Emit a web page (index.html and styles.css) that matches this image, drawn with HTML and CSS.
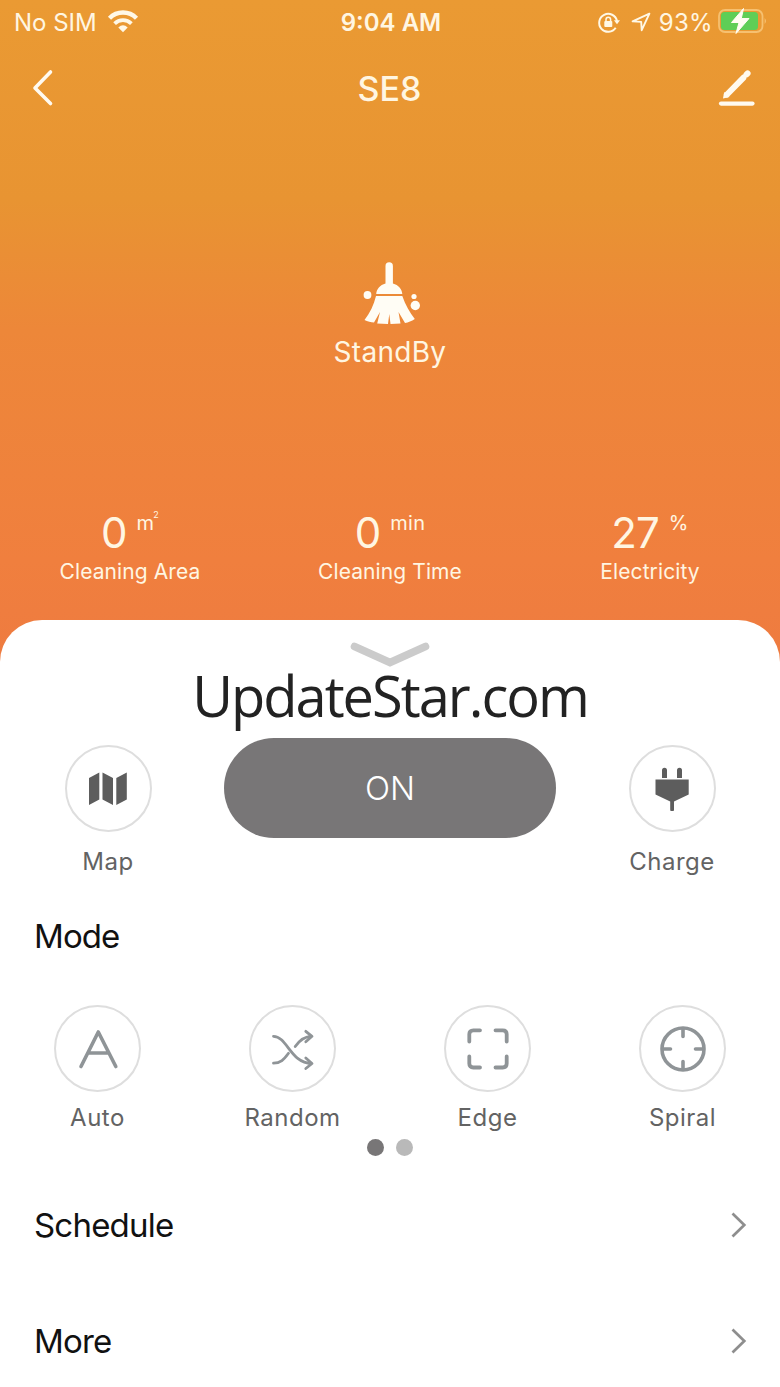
FILE: index.html
```
<!DOCTYPE html>
<html lang="en">

<head>
  <meta charset="UTF-8">
  <meta name="viewport" content="width=device-width, initial-scale=1.0">
  <title>SE8</title>
  <link rel="stylesheet" href="styles.css">
</head>

<body>
  <section class="hero">
    <div class="statusbar">
      <div class="status-left">
        <span class="carrier">No SIM</span>
        <svg class="wifi" width="32" height="24" viewBox="0 0 32 24" fill="none" stroke="#fff8e6">
          <path d="M2.5 8.2 A19 19 0 0 1 29.5 8.2" stroke-width="4.4" />
          <path d="M7.6 13.6 A12 12 0 0 1 24.4 13.6" stroke-width="3.8" />
          <path d="M11.3 17.4 Q16 13.2 20.7 17.4 L16 22.3Z" fill="#fff8e6" stroke="none" />
        </svg>
      </div>
      <span class="clock">9:04 AM</span>
      <div class="status-right">
        <svg width="24" height="24" viewBox="0 0 24 24" fill="none" stroke="#fff8e6" stroke-width="2">
          <path d="M18.7 17.8 A9 9 0 1 1 20 11" />
          <path d="M16.9 10.3 L23 10.3 L20 14.2Z" fill="#fff8e6" stroke="none" />
          <rect x="7.3" y="11" width="8" height="6" rx="1" fill="#fff8e6" stroke="none" />
          <path d="M9 11 V9.5 A2.3 2.3 0 0 1 13.6 9.5 V11" stroke-width="1.5" />
        </svg>
        <svg class="location" width="20" height="20" viewBox="0 0 20 20" fill="none" stroke="#fff8e6" stroke-width="1.9" stroke-linejoin="round">
          <path d="M18.4 1.6 L1.6 9.4 L10.2 9.9 L10.7 18.2Z" />
        </svg>
        <span class="percent">93%</span>
        <svg class="battery" width="50" height="26" viewBox="0 0 50 26">
          <rect x="1" y="2" width="43.5" height="22" rx="6" fill="none" stroke="#f6c070" stroke-width="1.8" />
          <path d="M46.6 10 Q49.4 13 46.6 16Z" fill="#f6c070" />
          <rect x="3" y="4" width="37" height="18" rx="3.5" fill="#5fce56" />
          <path d="M25.5 .5 L13.5 14.5 L21 14.5 L18 25.5 L31 10.5 L23.3 10.5Z" fill="#fffdf2" stroke="#fffdf2" stroke-width="1" />
        </svg>
      </div>
    </div>

    <header class="navbar">
      <svg class="back" width="24" height="38" viewBox="0 0 24 38" fill="none" stroke="#fffaf0" stroke-width="3.6" stroke-linecap="round" stroke-linejoin="round">
        <path d="M19.5 3 L4 19 L19.5 34.5" />
      </svg>
      <h1>SE8</h1>
      <svg class="edit" width="38" height="38" viewBox="0 0 38 38">
        <path d="M9 25.5 L25.3 8.8 M28.6 5.4 L29.6 4.4" stroke="#fffaf0" stroke-width="6" stroke-linecap="round" />
        <path d="M6.2 23 L5 29.4 L11.5 28Z" fill="#fffaf0" />
        <path d="M3 34.6 H34.5" stroke="#fffaf0" stroke-width="4.2" stroke-linecap="round" />
      </svg>
    </header>

    <div class="state">
      <svg width="60" height="64" viewBox="0 0 60 64" fill="#fffdf5">
        <path d="M25.5 5 A3.7 3.7 0 0 1 32.9 5 V22.5 C38.5 24 42 28 42.3 33 H16.2 C16.5 28 20 24 25.5 22.5Z" />
        <path d="M16 35 H42.3 C45.5 44 49.5 51 54.8 58 C51.5 60 48.5 61.5 45 62 L38.5 51 L40.5 62.5 L30.5 63 L29.3 53 L28 63 L17.2 62.5 L20 51 L14 61.5 C11 61.5 7.5 60.5 4.5 59 C10 52 13.8 44 16 35Z" />
        <circle cx="7.5" cy="34" r="3.9" />
        <circle cx="54" cy="35.5" r="2.6" />
        <circle cx="55.3" cy="44.5" r="4.7" />
      </svg>
      <p>StandBy</p>
    </div>

    <div class="stats">
      <div class="stat">
        <div class="value">0<span class="unit square">m<sup>2</sup></span></div>
        <div class="label">Cleaning Area</div>
      </div>
      <div class="stat">
        <div class="value">0<span class="unit">min</span></div>
        <div class="label">Cleaning Time</div>
      </div>
      <div class="stat">
        <div class="value">27<span class="unit">%</span></div>
        <div class="label">Electricity</div>
      </div>
    </div>
  </section>

  <main class="sheet">
    <svg class="handle" width="80" height="26" viewBox="0 0 80 26" fill="none" stroke="#cbcbcb" stroke-width="7.6" stroke-linecap="round">
      <path d="M4.5 4.5 L40 20.5 L75.5 4.5" />
    </svg>

    <div class="watermark">UpdateStar.com</div>

    <div class="controls">
      <div class="item">
        <div class="circle">
          <svg width="44" height="44" viewBox="0 0 44 44" fill="#5d5d5d">
            <path d="M3 11 L13.3 5.5 V32.5 L3 38Z M16.5 5.5 L27 11 V38 L16.5 32.5Z M30.3 11 L40.8 5.5 V32.5 L30.3 38Z" />
          </svg>
        </div>
        <span>Map</span>
      </div>
      <button type="button">ON</button>
      <div class="item">
        <div class="circle">
          <svg width="44" height="44" viewBox="0 0 44 44" fill="#5d5d5d">
            <path d="M5.5 12.5 H38.7 V27.5 L24 34.5 V42.5 A1.9 1.9 0 0 1 20.2 42.5 V34.5 L5.5 27.5Z" />
            <path d="M14.5 3.2 V8.5 M29.5 3.2 V8.5" stroke="#5d5d5d" stroke-width="5" stroke-linecap="round" />
            <path d="M12 8 H17 V11 H12Z M27 8 H32 V11 H27Z" />
          </svg>
        </div>
        <span>Charge</span>
      </div>
    </div>

    <h2>Mode</h2>

    <div class="modes">
      <div class="item">
        <div class="circle">
          <svg width="44" height="44" viewBox="0 0 44 44" fill="none" stroke="#8f9497" stroke-width="3.6" stroke-linecap="round" stroke-linejoin="round">
            <path d="M5 39.5 L22.3 5 L39.8 39.5 M12.5 26 H32" />
          </svg>
        </div>
        <span>Auto</span>
      </div>
      <div class="item">
        <div class="circle">
          <svg width="44" height="44" viewBox="0 0 44 44" fill="none" stroke="#8f9497" stroke-width="2.8" stroke-linecap="round" stroke-linejoin="round">
            <path d="M2.5 9.3 C16 9.3 20 36.5 40.5 36.5 M34.8 31 L41 36.5 L34.8 41.5" />
            <path d="M2.5 36.2 C9.5 36.2 13 32.5 17.5 26.3 M24.2 19.5 C28 14 32.5 9.3 40.5 9.3 M34.8 4.3 L41 9.3 L34.8 14.8" />
          </svg>
        </div>
        <span>Random</span>
      </div>
      <div class="item">
        <div class="circle">
          <svg width="44" height="44" viewBox="0 0 44 44" fill="none" stroke="#8f9497" stroke-width="3.8" stroke-linecap="round">
            <path d="M3.3 14.5 V7.3 Q3.3 3.3 7.3 3.3 H14 M29.5 3.3 H36.7 Q40.7 3.3 40.7 7.3 V14.5 M40.7 29.5 V36.5 Q40.7 40.5 36.7 40.5 H29.5 M14 40.5 H7.3 Q3.3 40.5 3.3 36.5 V29.5" />
          </svg>
        </div>
        <span>Edge</span>
      </div>
      <div class="item">
        <div class="circle">
          <svg width="48" height="48" viewBox="0 0 48 48" fill="none" stroke="#8f9497" stroke-width="3.6" stroke-linecap="round">
            <circle cx="24" cy="24" r="21" />
            <path d="M24 4 V11.5 M24 36.5 V44 M4 24 H11.5 M36.5 24 H44" />
          </svg>
        </div>
        <span>Spiral</span>
      </div>
    </div>

    <div class="dots">
      <i class="active"></i>
      <i></i>
    </div>

    <div class="row">
      <span>Schedule</span>
      <svg width="16" height="26" viewBox="0 0 16 26" fill="none" stroke="#8e8e8e" stroke-width="2.7">
        <path d="M1.5 1.5 L13.3 13 L1.5 24.5" />
      </svg>
    </div>
    <div class="row">
      <span>More</span>
      <svg width="16" height="26" viewBox="0 0 16 26" fill="none" stroke="#8e8e8e" stroke-width="2.7">
        <path d="M1.5 1.5 L13.3 13 L1.5 24.5" />
      </svg>
    </div>
  </main>
</body>

</html>
```
FILE: styles.css
```
* {
  box-sizing: border-box;
  margin: 0;
  padding: 0;
}

body {
  width: 780px;
  height: 1387px;
  overflow: hidden;
  font-family: Inter, "Liberation Sans", sans-serif;
  background: #fff;
}

svg {
  display: block;
  flex: none;
}

.hero {
  height: 662px;
  color: #fff6e2;
  background: linear-gradient(180deg, #ea9a33 0, #e89432 200px, #ed8739 330px, #f07f3e 560px, #ee7b40 662px);
}

.statusbar {
  display: grid;
  grid-template-columns: 1fr auto 1fr;
  align-items: center;
  height: 44px;
  padding: 0 12px 0 14px;
  font-size: 24px;
}

.status-left,
.status-right {
  display: flex;
  align-items: center;
}

.status-right {
  justify-content: flex-end;
}

.wifi {
  margin-left: 10px;
}

.clock {
  font-weight: 600;
}

.location {
  margin: 0 8px 0 10px;
}

.percent {
  letter-spacing: 0.3px;
}

.battery {
  margin: -2px 0 0 5px;
}

.navbar {
  display: flex;
  justify-content: space-between;
  align-items: center;
  height: 88px;
  padding: 0 24px 0 31px;
}

h1 {
  margin-left: 6px;
  font-size: 34px;
  font-weight: 500;
}

.state {
  display: flex;
  flex-direction: column;
  align-items: center;
  padding-top: 129px;
}

.state p {
  margin-top: 10px;
  font-size: 28px;
  line-height: 34px;
  letter-spacing: 0.3px;
}

.stats {
  display: grid;
  grid-template-columns: repeat(3, 1fr);
  margin-top: 140px;
  text-align: center;
}

.value {
  display: flex;
  justify-content: center;
  height: 48px;
  font-size: 42px;
  line-height: 48px;
  letter-spacing: -1px;
}

.unit {
  margin-left: 10px;
  font-size: 20px;
  line-height: 28px;
  letter-spacing: 0.3px;
}

.square {
  display: flex;
}

.square sup {
  margin-left: -1px;
  font-size: 9px;
  line-height: 12px;
}

.label {
  font-size: 21px;
  line-height: 30px;
  letter-spacing: 0.1px;
}

.sheet {
  height: 767px;
  margin-top: -42px;
  padding-top: 22px;
  border-radius: 42px 42px 0 0;
  background: #fff;
}

.handle {
  margin: 0 auto;
}

.watermark {
  height: 70px;
  margin-top: -11px;
  color: #222;
  font-family: "Open Sans", sans-serif;
  font-size: 56px;
  line-height: 76px;
  letter-spacing: -2px;
  text-align: center;
}

.controls {
  display: grid;
  grid-template-columns: 216px 1fr 216px;
  margin-top: 11px;
}

.item {
  display: flex;
  flex-direction: column;
  align-items: center;
  color: #636363;
  font-size: 24px;
  line-height: 30px;
  letter-spacing: 0.5px;
}

.circle {
  display: flex;
  justify-content: center;
  align-items: center;
  width: 87px;
  height: 87px;
  border: 2px solid #dedede;
  border-radius: 50%;
}

.controls .circle {
  margin: 7px 0 15px;
}

.controls button {
  height: 100px;
  margin: 0 8px;
  border: none;
  border-radius: 50px;
  color: #fff;
  background: #787677;
  font-family: inherit;
  font-size: 33px;
  font-weight: 300;
}

h2 {
  margin: 39px 0 0 34px;
  color: #111;
  font-size: 33px;
  font-weight: 400;
  line-height: 40px;
  letter-spacing: -0.9px;
}

.modes {
  display: grid;
  grid-template-columns: repeat(4, 1fr);
  margin-top: 49px;
}

.modes .circle {
  margin-bottom: 11px;
}

.dots {
  display: flex;
  justify-content: center;
  gap: 12px;
  margin-top: 6px;
}

.dots i {
  width: 17px;
  height: 17px;
  border-radius: 50%;
  background: #b9b9b9;
}

.dots .active {
  background: #787677;
}

.row {
  display: flex;
  justify-content: space-between;
  align-items: center;
  height: 116px;
  padding: 0 33px 0 34px;
  color: #111;
  font-size: 33px;
  letter-spacing: -0.8px;
}

.dots + .row {
  margin-top: 11px;
}
```
